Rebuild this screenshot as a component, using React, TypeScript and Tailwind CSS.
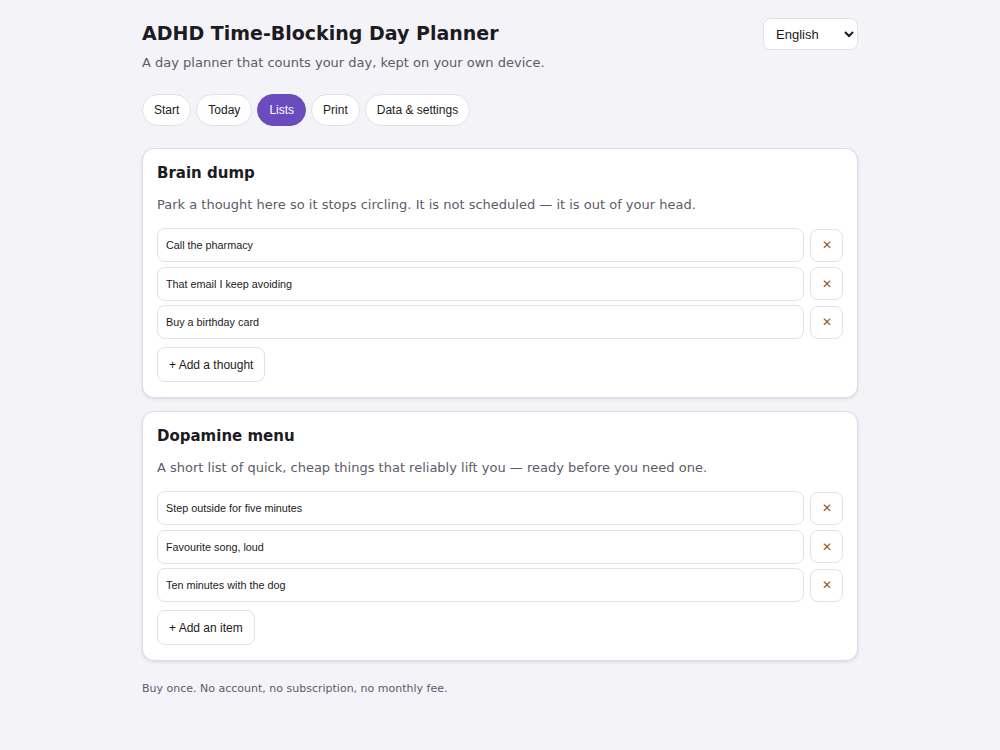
import React from "react";

function Row({ text }: { text: string }) {
  return (
    <div className="flex gap-[6px] items-center">
      <input
        defaultValue={text}
        className="flex-1 h-[34px] rounded-[8px] border border-[#e2e1ea] bg-white px-[8px] font-['Liberation_Sans',Arial,sans-serif] text-[10.8px] text-[#1c1b22] outline-none"
      />
      <button className="w-[33px] h-[33px] rounded-[8px] border border-[#e2e1ea] bg-white font-['Liberation_Sans',Arial,sans-serif] text-[#955a1e] text-[12px] flex items-center justify-center">
        ✕
      </button>
    </div>
  );
}

function Card({ title, desc, items, add }: { title: string; desc: string; items: string[]; add: string }) {
  return (
    <section className="bg-white rounded-[12px] border border-[#dddce8] shadow-[0_1px_3px_rgba(30,20,60,0.12)] px-[14px] pt-[13px] pb-[15px]">
      <h2 className="font-['DejaVu_Sans',sans-serif] text-[15px] font-bold text-[#1c1b22] leading-[22px]">{title}</h2>
      <p className="font-['DejaVu_Sans',sans-serif] text-[13px] text-[#5d5b68] mt-[11px] leading-[20px]">{desc}</p>
      <div className="mt-[13px] flex flex-col gap-[4.5px]">
        {items.map((t) => (
          <Row key={t} text={t} />
        ))}
      </div>
      <button className="mt-[8px] h-[35px] px-[11px] rounded-[8px] border border-[#e2e1ea] bg-white font-['Liberation_Sans',Arial,sans-serif] text-[12px] text-[#1c1b22]">
        {add}
      </button>
    </section>
  );
}

export default function App() {
  const tabs = ["Start", "Today", "Lists", "Print", "Data & settings"];
  return (
    <div className="min-h-[750px] bg-[#f4f3f8]">
      <div className="w-[716px] mx-auto pt-[18px] pb-[20px]">
        <header className="flex justify-between items-start">
          <div>
            <h1 className="font-['DejaVu_Sans',sans-serif] text-[19px] font-bold text-[#1c1b22] leading-[30px]">
              ADHD Time-Blocking Day Planner
            </h1>
            <p className="font-['DejaVu_Sans',sans-serif] text-[13px] text-[#5d5b68] mt-[6px] leading-[18px]">
              A day planner that counts your day, kept on your own device.
            </p>
          </div>
          <select className="w-[95px] h-[32px] rounded-[8px] border border-[#e2e1ea] bg-white font-['Liberation_Sans',Arial,sans-serif] text-[13px] px-[8px] text-[#1c1b22]">
            <option>English</option>
          </select>
        </header>
        <nav className="flex gap-[5px] mt-[22px]">
          {tabs.map((t) => (
            <button
              key={t}
              className={
                t === "Lists"
                  ? "h-[32px] px-[11px] rounded-full border border-[#6a4cbf] bg-[#6a4cbf] font-['Liberation_Sans',Arial,sans-serif] text-white text-[12px]"
                  : "h-[32px] px-[11px] rounded-full border border-[#e2e1ea] bg-white font-['Liberation_Sans',Arial,sans-serif] text-[#1c1b22] text-[12px]"
              }
            >
              {t}
            </button>
          ))}
        </nav>
        <div className="flex flex-col gap-[13px] mt-[22px]">
          <Card
            title="Brain dump"
            desc="Park a thought here so it stops circling. It is not scheduled — it is out of your head."
            items={["Call the pharmacy", "That email I keep avoiding", "Buy a birthday card"]}
            add="+ Add a thought"
          />
          <Card
            title="Dopamine menu"
            desc="A short list of quick, cheap things that reliably lift you — ready before you need one."
            items={["Step outside for five minutes", "Favourite song, loud", "Ten minutes with the dog"]}
            add="+ Add an item"
          />
        </div>
        <p className="font-['DejaVu_Sans',sans-serif] text-[11px] text-[#5d5b68] mt-[20px]">
          Buy once. No account, no subscription, no monthly fee.
        </p>
      </div>
    </div>
  );
}
